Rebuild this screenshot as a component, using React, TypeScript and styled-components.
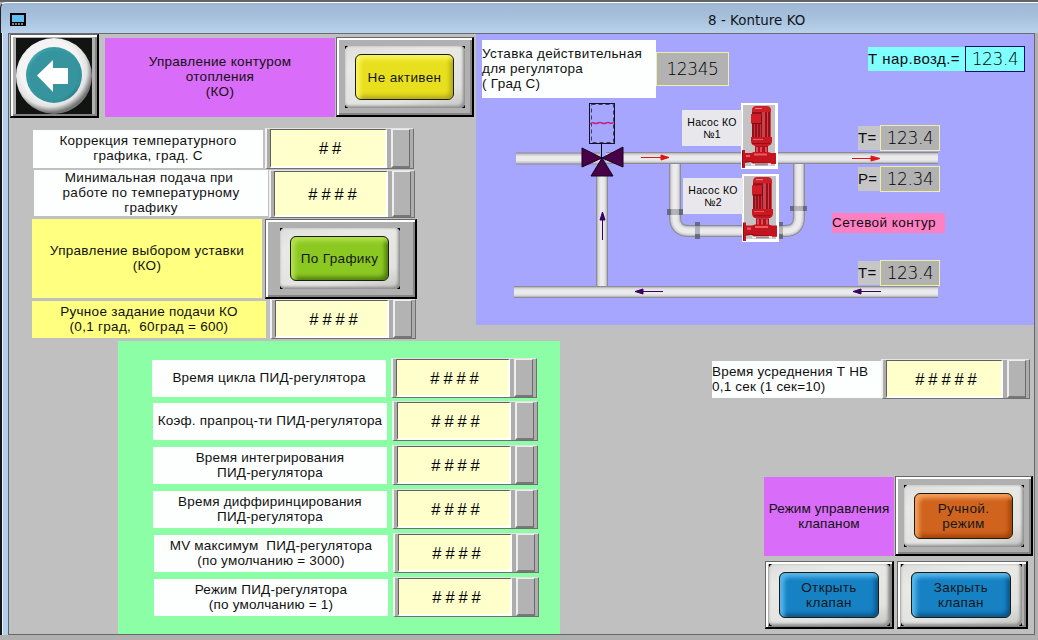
import React from 'react';
import styled, { createGlobalStyle, css } from 'styled-components';

const fonts = {
  label: "'Liberation Sans', Arial, sans-serif",
  value: "'DejaVu Sans', Verdana, sans-serif",
};

const colours = {
  face: '#c0c0c0',
  button: '#b0b0b0',
  magenta: '#d96cf8',
  yellow: '#ffff80',
  white: '#fdfffe',
  green: '#8cffa6',
  process: '#a6a6ff',
  input: '#ffffcc',
};

const GlobalStyle = createGlobalStyle`
  * {
    box-sizing: border-box;
  }

  body {
    margin: 0;
    overflow: hidden;
  }
`;

const Window = styled.div`
  display: flex;
  flex-direction: column;
  width: 1038px;
  height: 640px;
  background: ${colours.button};
  border-top: 2px solid #606468;
  overflow: hidden;
`;

const TitleBar = styled.header`
  display: flex;
  align-items: center;
  height: 31px;
  flex-shrink: 0;
  padding: 3px 0 0 9px;
  border-top: 1px solid #fff;
  border-left: 1px solid #222;
  border-top-left-radius: 6px;
  background: linear-gradient(#9cb6d3, #a9c3df 55%, #bad2eb);
  color: #101418;

  svg {
    display: block;
  }
`;

const Title = styled.span`
  margin-left: 682px;
  padding-top: 1px;
  font: 13.4px ${fonts.value};
  letter-spacing: 0.05px;
  white-space: pre;
`;

const Body = styled.div`
  display: flex;
  height: 602px;
  flex-shrink: 0;
`;

const LeftFrame = styled.div`
  width: 9px;
  flex-shrink: 0;
  border-left: 2px solid #15191c;
  border-right: 1px solid #5c6670;
  background: linear-gradient(90deg, #eaf4fc 0 1px, #b4cfe9 1px);
`;

const Screen = styled.main`
  width: 1026px;
  flex-shrink: 0;
  border-top: 1px solid #686c72;
  border-right: 1px solid #686868;
  border-bottom: 1px solid #686868;
  background: ${colours.face};
`;

const Upper = styled.div`
  display: flex;
  height: 307px;
`;

const Lower = styled.div`
  display: flex;
  height: 293px;
`;

const Controls = styled.div`
  width: 467px;
  flex-shrink: 0;
`;

const Row = styled.div<{ $indent?: number; $top?: number; $gap?: number }>`
  display: flex;
  align-items: flex-start;
  margin-left: ${({ $indent = 0 }) => $indent}px;
  margin-top: ${({ $top = 0 }) => $top}px;
  gap: ${({ $gap = 0 }) => $gap}px;
`;

interface CaptionProps {
  $width: number;
  $height: number;
  $colour?: string;
  $top?: number;
  $left?: boolean;
  $tracking?: number;
}

const Caption = styled.div<CaptionProps>`
  display: flex;
  flex-direction: column;
  justify-content: center;
  flex-shrink: 0;
  width: ${({ $width }) => $width}px;
  height: ${({ $height }) => $height}px;
  margin-top: ${({ $top = 0 }) => $top}px;
  padding-bottom: 2px;
  background: ${({ $colour = colours.white }) => $colour};
  font: 13.5px/15px ${fonts.label};
  letter-spacing: ${({ $tracking = 0.3 }) => $tracking}px;
  text-align: ${({ $left }) => ($left ? 'left' : 'center')};
  white-space: pre;
  color: #111;
`;

const raised = css`
  border: 1px solid #666;
  border-right: 2px solid #000;
  border-bottom: 2px solid #000;
  box-shadow: inset 2px 2px #fff, inset -2px -2px #858585;
`;

const ButtonRoot = styled.button<{ $width: number; $height: number; $pad: string }>`
  ${raised}
  display: flex;
  flex-shrink: 0;
  width: ${({ $width }) => $width}px;
  height: ${({ $height }) => $height}px;
  padding: ${({ $pad }) => $pad};
  background: ${colours.button};
`;

// Black shows only at the very corners of the bezel
const Bezel = styled.span`
  display: flex;
  flex: 1;
  background:
    linear-gradient(#000, #000) 0 0 / 3px 3px no-repeat,
    linear-gradient(#000, #000) 100% 0 / 3px 3px no-repeat,
    linear-gradient(#000, #000) 0 100% / 3px 3px no-repeat,
    linear-gradient(#000, #000) 100% 100% / 3px 3px no-repeat;
`;

const Ring = styled.span`
  display: flex;
  flex: 1;
  padding: 8px 11px 8px 10px;
  border-radius: 5px;
  background: linear-gradient(165deg, #dededc, #e9e9e6 25%, #e2e2e0 75%, #c4c4c2);
  box-shadow: inset -2px -2px 3px #8c8c8c, inset 1px 1px 2px #cfcfcf;
`;

const Cap = styled.span<{ $light: string; $main: string; $dark: string }>`
  display: flex;
  flex: 1;
  align-items: center;
  justify-content: center;
  border: 1px solid #1c1c10;
  border-radius: 6px;
  background: ${({ $main }) => $main};
  box-shadow:
    inset 4px 4px 4px ${({ $light }) => $light},
    inset -3px -3px 4px ${({ $dark }) => $dark};
  font: 13.5px/15px ${fonts.label};
  letter-spacing: 0.35px;
  text-align: center;
  white-space: pre;
  color: #14181c;
`;

const palettes = {
  yellow: { $light: '#f7f45c', $main: '#e8df1e', $dark: '#b0a81c' },
  lime: { $light: '#b4e04e', $main: '#8cc822', $dark: '#4c7c10' },
  orange: { $light: '#f5a05c', $main: '#d0641e', $dark: '#a04008' },
  blue: { $light: '#58b8ec', $main: '#1682c4', $dark: '#0a5488' },
};

interface LampButtonProps {
  width: number;
  height: number;
  pad: string;
  palette: keyof typeof palettes;
  children: React.ReactNode;
}

const LampButton: React.FunctionComponent<LampButtonProps> = ({
  width,
  height,
  pad,
  palette,
  children,
}) => (
  <ButtonRoot $width={width} $height={height} $pad={pad}>
    <Bezel>
      <Ring>
        <Cap {...palettes[palette]}>{children}</Cap>
      </Ring>
    </Bezel>
  </ButtonRoot>
);

const FieldRoot = styled.div<{ $width: number; $height: number }>`
  display: flex;
  flex-shrink: 0;
  width: ${({ $width }) => $width}px;
  height: ${({ $height }) => $height}px;
  padding: 0 1px 0 3px;
  border-top: 1px solid #e4e4e4;
  border-left: 2px solid #f2f2f2;
  border-right: 1px solid #707070;
  border-bottom: 1px solid #707070;
  background: #adadad;
`;

const FieldValue = styled.div`
  display: flex;
  flex: 1;
  align-items: center;
  justify-content: center;
  padding: 1px 0 0 8px;
  border: 1px solid #606060;
  border-right: 2px solid #fff;
  border-bottom: 2px solid #fff;
  background: ${colours.input};
  font: 16.5px ${fonts.label};
  letter-spacing: 3.9px;
  color: #000;
`;

const FieldKnob = styled.div`
  width: 19px;
  margin-left: 4px;
  margin-right: 2px;
  border-left: 2px solid #eee;
  border-top: 1px solid #eee;
  border-right: 1px solid #6a6a6a;
  border-bottom: 2px solid #777;
  background: #b3b3b3;
`;

interface FieldProps {
  width?: number;
  height?: number;
  value?: string;
}

const Field: React.FunctionComponent<FieldProps> = ({ width = 146, height = 40, value = '####' }) => (
  <FieldRoot $width={width} $height={height}>
    <FieldValue>{value}</FieldValue>
    <FieldKnob />
  </FieldRoot>
);

const BackButton = styled(ButtonRoot)`
  svg {
    display: block;
  }
`;

const Process = styled.section`
  position: relative;
  width: 558px;
  height: 291px;
  background: ${colours.process};

  > svg {
    display: block;
  }
`;

// Tags sit over the mimic diagram, in its own coordinates
const Tag = styled.div<{ $x: number; $y: number }>`
  position: absolute;
  left: ${({ $x }) => $x}px;
  top: ${({ $y }) => $y}px;
  display: flex;
  align-items: center;
`;

interface TagNameProps {
  $width: number;
  $height?: number;
  $colour?: string;
  $size?: number;
  $tracking?: number;
}

const TagName = styled.div<TagNameProps>`
  width: ${({ $width }) => $width}px;
  height: ${({ $height = 24 }) => $height}px;
  background: ${({ $colour = '#c6c6c6' }) => $colour};
  font: ${({ $size = 15 }) => $size}px / ${({ $height = 24 }) => $height - 1}px ${fonts.label};
  letter-spacing: ${({ $tracking = 0.3 }) => $tracking}px;
  white-space: pre;
  color: #0c0c14;
`;

const TagValue = styled.div<{ $width?: number; $height?: number; $cyan?: boolean }>`
  display: flex;
  align-items: center;
  justify-content: center;
  width: ${({ $width = 60 }) => $width}px;
  height: ${({ $height = 26 }) => $height}px;
  border: 1px solid ${({ $cyan }) => ($cyan ? '#101060' : '#f0f0a0')};
  background: ${({ $cyan }) => ($cyan ? '#80ffff' : '#b2b2b2')};
  font: 200 17px ${fonts.value};
  letter-spacing: -0.4px;
  color: #000;
`;

const PumpName = styled.div`
  width: 60px;
  height: 36px;
  padding-top: 6px;
  background: #e8e8ec;
  font: 10.5px/12px ${fonts.label};
  letter-spacing: 0.3px;
  text-align: center;
  white-space: pre;
  color: #000;
`;

const PidPanel = styled.section`
  width: 442px;
  height: 293px;
  margin-left: 109px;
  padding-top: 17px;
  background: ${colours.green};
  flex-shrink: 0;
`;

const ValveColumn = styled.div`
  margin-left: 152px;
`;

const BackArrow = () => (
  <svg width="76" height="76" viewBox="0 0 76 76">
    <defs>
      <radialGradient id="rim" cx="45%" cy="42%" r="56%">
        <stop offset="0.7" stopColor="#f4f4f4" />
        <stop offset="0.86" stopColor="#e2e2e2" />
        <stop offset="1" stopColor="#757575" />
      </radialGradient>
      <linearGradient id="disc" x1="0" y1="0" x2="1" y2="1">
        <stop offset="0" stopColor="#7cc8cc" />
        <stop offset="0.2" stopColor="#3a9ca4" />
        <stop offset="0.8" stopColor="#32909a" />
        <stop offset="1" stopColor="#145058" />
      </linearGradient>
    </defs>
    <rect width="76" height="76" fill="#121412" />
    <circle cx="38" cy="38" r="38" fill="url(#rim)" />
    <circle cx="38" cy="37" r="28" fill="url(#disc)" />
    <circle cx="38" cy="37" r="24.5" fill="#35949d" />
    <path d="M21 37.5 37 22v8h15v16H37v8z" fill="#fff" />
  </svg>
);

const ScreenIcon = () => (
  <svg width="16" height="13" viewBox="0 0 16 13">
    <rect width="16" height="13" fill="#000" />
    <rect x="2" y="2" width="12" height="7" fill="#62bdf0" />
    <path d="M2 11h2M5 11h2M8 11h2M11 11h2" stroke="#aaa" strokeWidth="1.5" />
  </svg>
);

const Pipe: React.FunctionComponent<{ d: string }> = ({ d }) => (
  <g fill="none" strokeLinejoin="round">
    <path d={d} stroke="#8c8c94" strokeWidth="12" />
    <path d={d} stroke="#bcbcc0" strokeWidth="10" />
    <path d={d} stroke="#d8d8dc" strokeWidth="8" />
    <path d={d} stroke="#ebebec" strokeWidth="5" />
  </g>
);

const Pump: React.FunctionComponent<{ x: number; y: number; h: number }> = ({ x, y, h }) => (
  <svg x={x} y={y} width="37" height={h} viewBox="0 0 37 66" preserveAspectRatio="none">
    <rect width="37" height="66" fill="#fff" />
    <rect x="2" y="2" width="32" height="61" fill="#c4c2c2" />
    <path d="M11 6q1-3 4-3h11q3 0 4 3v4H11z" fill="#cc2028" />
    <path d="M14 5.500h7" stroke="#f08088" />
    <path d="M11 9h19v26H11z" fill="#94101a" />
    <path d="M23.500 9v26M26.500 9v26M29.500 9v26" stroke="#dc3c44" />
    <path d="M13.500 20v15M16.500 20v15M19.500 20v15" stroke="#c8303a" />
    <path d="M22 9v26" stroke="#f07880" />
    <rect x="10" y="11" width="11" height="9" fill="#d41c28" />
    <path d="M10.500 20.500h10v-9" fill="none" stroke="#74101a" />
    <path d="M10 34h21v4q0 4-4 5H14q-4-1-4-5z" fill="#c81824" />
    <path d="M12 36.500h10" stroke="#ec5a62" />
    <path d="M11 40.500h18" stroke="#980c18" />
    <path d="M14 43h13v8H14z" fill="#a81420" />
    <path d="M16 44v6M20 44v6M25 44v6" stroke="#e84852" strokeWidth="2" />
    <path d="M1 47h3v3h6l3-1h14l3 1h5v11h-4l-4-1-2 2H13l-3-3-6 1v5H1z" fill="#c41420" />
    <path d="M13 51.500h13M5 53h4" stroke="#ee5a62" strokeWidth="2" />
    <path d="M4 58.500h6l3 1.500h14" fill="none" stroke="#86101a" />
    <path d="M1.500 48v16" stroke="#8c0c16" />
    <path d="M10 60.500h20v2H10z" fill="#f0eaea" />
    <path d="M14 61h13v1.500H14z" fill="#989090" />
  </svg>
);

const Mimic = () => (
  <svg width="558" height="291" viewBox="476 34 558 291">
    <Pipe d="M602 170V290" />
    <Pipe d="M514 292H938" />
    <Pipe d="M516 158.500H600" />
    <Pipe d="M675 160V217Q675 231 689 231H785Q799 231 799 217V160" />
    <Pipe d="M606 158H938" />
    <g fill="#5c6070" fillOpacity="0.850">
      <path d="M667 209h4v6h-4zM679 209h4v6h-4zM695 222h5v4h-5zM695 234h5v5h-5z" />
      <path d="M790 206h4v5h-4zM803 206h4v5h-4zM779 222h4v4h-4zM779 234h4v5h-4z" />
    </g>
    <g fill="#90909a" fillOpacity="0.600">
      <path d="M671 209h8v6h-8zM695 226h5v8h-5zM794 206h9v5h-9zM779 226h4v8h-4z" />
    </g>
    <path d="M582 148 602 158 582 167zM623 147 602 158 623 167zM602 158 613 176H591z" fill="#480048" stroke="#16001c" />
    <path d="M601.500 143v15" stroke="#000" />
    <rect x="589.500" y="103.500" width="25" height="40" fill="none" stroke="#101028" />
    <rect x="591.500" y="104.500" width="22" height="38" fill="none" stroke="#3c3c58" strokeDasharray="4 3" />
    <path d="M590 124q2-2 4-1t4 0 4 0 4 0 4 0 4-1" fill="none" stroke="#c02480" strokeWidth="1.500" />
    <g fill="#e01414" stroke="#e01414">
      <path d="M641 157.500h22M852 158.500h22" />
      <path d="M661 155 669 157.500 661 160zM871 156 880 158.500 871 161z" />
    </g>
    <g fill="#380060" stroke="#380060">
      <path d="M602.500 240V217M663 291.500h-22M881 291.500h-22" />
      <path d="M600 220 602.500 212 605 220zM643 289 635 291.500 643 294zM861 289 853 291.500 861 294z" />
    </g>
    <Pump x={741} y={103} h={66} />
    <Pump x={742} y={174} h={68} />
  </svg>
);

const pidRows = [
  { text: 'Время цикла ПИД-регулятора', indent: 34, top: 0 },
  { text: 'Коэф. прапроц-ти ПИД-регулятора', indent: 35, top: 3 },
  { text: 'Время интегрирования\nПИД-регулятора', indent: 35, top: 4 },
  { text: 'Время диффиринцирования\nПИД-регулятора', indent: 35, top: 4 },
  { text: 'MV максимум  ПИД-регулятора\n(по умолчанию = 3000)', indent: 36, top: 4 },
  { text: 'Режим ПИД-регулятора\n(по умолчанию = 1)', indent: 36, top: 4 },
];

const App: React.FunctionComponent = () => (
  <>
    <GlobalStyle />
    <Window>
      <TitleBar>
        <ScreenIcon />
        <Title>8 - Konture KO</Title>
      </TitleBar>
      <Body>
        <LeftFrame />
        <Screen>
          <Upper>
            <Controls>
              <Row $indent={1}>
                <BackButton $width={89} $height={84} $pad="3px 4px 3px 5px">
                  <BackArrow />
                </BackButton>
                <Row $indent={6} $top={3} $gap={1}>
                  <Caption $width={230} $height={79} $top={1} $colour={colours.magenta}>
                    {'Управление контуром\nотопления\n(КО)'}
                  </Caption>
                  <LampButton width={138} height={80} pad="8px 7px 7px 8px" palette="yellow">
                    Не активен
                  </LampButton>
                </Row>
              </Row>
              <Row $indent={24} $top={10} $gap={2}>
                <Caption $width={230} $height={38} $top={2}>
                  {'Коррекция температурного\nграфика, град. С'}
                </Caption>
                <Field width={149} height={41} value="##" />
              </Row>
              <Row $indent={25} $top={1} $gap={1}>
                <Caption $width={234} $height={46}>
                  {'Минимальная подача при \nработе по температурному\nграфику'}
                </Caption>
                <Field height={48} />
              </Row>
              <Row $indent={23} $top={1} $gap={3}>
                <Caption $width={230} $height={79} $colour={colours.yellow}>
                  {'Управление выбором уставки\n(КО)'}
                </Caption>
                <LampButton width={152} height={80} pad="8px 15px 8px 14px" palette="lime">
                  По Графику
                </LampButton>
              </Row>
              <Row $indent={23} $gap={4}>
                <Caption $width={234} $height={37} $top={2} $colour={colours.yellow}>
                  {'Ручное задание подачи КО\n(0,1 град,  60град = 600)'}
                </Caption>
                <Field />
              </Row>
            </Controls>
            <Process>
              <Mimic />
              <Tag $x={6} $y={6}>
                <Caption $width={174} $height={58} $left>
                  {'Уставка действительная\nдля регулятора\n( Град С)'}
                </Caption>
                <TagValue $width={73} $height={34}>
                  12345
                </TagValue>
              </Tag>
              <Tag $x={392} $y={12}>
                <TagName $width={97} $colour="#80ffff" $size={15} $tracking={0.45}>
                  Т нар.возд.=
                </TagName>
                <TagValue $cyan>123.4</TagValue>
              </Tag>
              <Tag $x={382} $y={91}>
                <TagName $width={22}>T=</TagName>
                <TagValue>123.4</TagValue>
              </Tag>
              <Tag $x={382} $y={132}>
                <TagName $width={22}>P=</TagName>
                <TagValue>12.34</TagValue>
              </Tag>
              <Tag $x={356} $y={179}>
                <TagName $width={113} $height={20} $colour="#ff80c0" $size={13.5} $tracking={0.45}>
                  Сетевой контур
                </TagName>
              </Tag>
              <Tag $x={382} $y={226}>
                <TagName $width={22}>T=</TagName>
                <TagValue>123.4</TagValue>
              </Tag>
              <Tag $x={206} $y={76}>
                <PumpName>{'Насос КО\n№1'}</PumpName>
              </Tag>
              <Tag $x={207} $y={144}>
                <PumpName>{'Насос КО\n№2'}</PumpName>
              </Tag>
            </Process>
          </Upper>
          <Lower>
            <PidPanel>
              {pidRows.map(({ text, indent, top }) => (
                <Row key={text} $indent={indent} $top={top} $gap={5}>
                  <Caption $width={234} $height={37} $top={2} $tracking={0.2}>
                    {text}
                  </Caption>
                  <Field />
                </Row>
              ))}
            </PidPanel>
            <ValveColumn>
              <Row $top={18}>
                <Caption $width={169} $height={37} $top={2} $left $tracking={0.2}>
                  {'Время усреднения Т НВ\n0,1 сек (1 сек=10)'}
                </Caption>
                <Field width={149} value="#####" />
              </Row>
              <Row $indent={52} $top={77} $gap={1}>
                <Caption $width={130} $height={79} $top={1} $colour={colours.magenta} $tracking={0.1}>
                  {'Режим управления\nклапаном'}
                </Caption>
                <LampButton width={138} height={80} pad="8px 7px 7px 8px" palette="orange">
                  {'Ручной.\nрежим'}
                </LampButton>
              </Row>
              <Row $indent={53} $top={5} $gap={3}>
                <LampButton width={129} height={68} pad="2px 2px 1px 3px" palette="blue">
                  {'Открыть\nклапан'}
                </LampButton>
                <LampButton width={131} height={68} pad="2px 4px 1px 3px" palette="blue">
                  {'Закрыть\nклапан'}
                </LampButton>
              </Row>
            </ValveColumn>
          </Lower>
        </Screen>
      </Body>
    </Window>
  </>
);

export default App;
